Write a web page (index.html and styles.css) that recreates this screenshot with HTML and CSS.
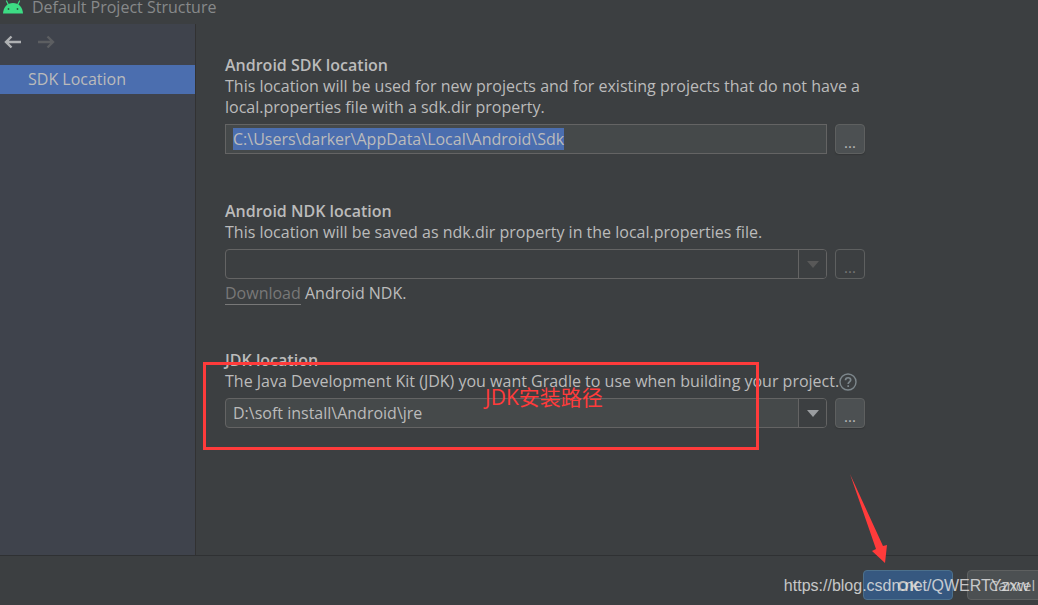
FILE: index.html
```html
<!DOCTYPE html>
<html lang="en">
<head>
<meta charset="utf-8">
<title>Default Project Structure</title>
<link rel="stylesheet" href="styles.css">
</head>
<body>
<div class="window">
  <header class="titlebar">
    <svg class="logo" width="20" height="14" viewBox="0 0 20 14" aria-hidden="true">
      <path d="M5.500 5 3.500 1M14.500 5l2-4" stroke="#3ddc84" stroke-width="1.200" stroke-linecap="round"/>
      <path d="M0 13.500C.4 7 4.500 3 10 3s9.600 4 10 10.500z" fill="#3ddc84"/>
      <circle cx="5.500" cy="9" r=".9" fill="#2b5b41"/><circle cx="14.500" cy="9" r=".9" fill="#2b5b41"/>
    </svg>
    <h1 class="title">Default Project Structure</h1>
  </header>
  <div class="body">
    <aside class="sidebar">
      <div class="history">
        <button class="nav-button" type="button" aria-label="Back"><svg width="18" height="14" viewBox="0 0 18 14"><path d="M17 7H2M7.500 1.500 2 7l5.500 5.500" fill="none" stroke="currentColor" stroke-width="2.400"/></svg></button>
        <button class="nav-button" type="button" aria-label="Forward" disabled><svg width="18" height="14" viewBox="0 0 18 14"><path d="M1 7h15M10.500 1.500 16 7l-5.500 5.500" fill="none" stroke="currentColor" stroke-width="2.400"/></svg></button>
      </div>
      <nav><a class="nav-item" href="#sdk" aria-current="page">SDK Location</a></nav>
    </aside>
    <main class="content">
      <section class="group">
        <h2 class="heading"><label for="sdk">Android SDK location</label></h2>
        <p class="description">This location will be used for new projects and for existing projects that do not have a local.properties file with a sdk.dir property.</p>
        <div class="row">
          <input class="field" id="sdk" type="text" value="C:\Users\darker\AppData\Local\Android\Sdk" spellcheck="false">
          <button class="browse" type="button" aria-label="Browse for SDK">...</button>
        </div>
      </section>
      <section class="group">
        <h2 class="heading"><label for="ndk">Android NDK location</label></h2>
        <p class="description">This location will be saved as ndk.dir property in the local.properties file.</p>
        <div class="row">
          <div class="combo disabled">
            <select class="field" id="ndk" disabled><option></option></select>
            <span class="combo-arrow"><svg width="12" height="7" viewBox="0 0 12 7"><path d="M0 0h12L6 7z" fill="currentColor"/></svg></span>
          </div>
          <button class="browse" type="button" aria-label="Browse for NDK" disabled>...</button>
        </div>
        <p class="hint"><a class="link" href="#ndk">Download</a> Android NDK.</p>
      </section>
      <section class="group">
        <h2 class="heading"><label for="jdk">JDK location</label></h2>
        <p class="description with-help">The Java Development Kit (JDK) you want Gradle to use when building your project.<button class="help" type="button" aria-label="Help"><svg width="18" height="18" viewBox="0 0 18 18"><circle cx="9" cy="9" r="8" fill="none" stroke="currentColor" stroke-width="1.400"/><path d="M6.500 7.200c0-3.200 5.200-3.200 5.200-.3 0 2-2.500 1.900-2.500 4M9.200 12.200v1.700" fill="none" stroke="currentColor" stroke-width="1.700"/></svg></button></p>
        <div class="row">
          <div class="combo">
            <select class="field" id="jdk"><option>D:\soft install\Android\jre</option></select>
            <span class="combo-arrow"><svg width="12" height="7" viewBox="0 0 12 7"><path d="M0 0h12L6 7z" fill="currentColor"/></svg></span>
          </div>
          <button class="browse" type="button" aria-label="Browse for JDK">...</button>
        </div>
      </section>
    </main>
  </div>
  <footer class="footer">
    <button class="action primary" type="button">OK</button>
    <button class="action" type="button">Cancel</button>
  </footer>
  <div class="mark-box"></div>
  <div class="mark-text" lang="zh">JDK安装路径</div>
  <svg class="mark-arrow" width="38" height="90" viewBox="0 0 38 90" aria-hidden="true"><path d="M0 0 33 72l4-1-2 18-13-12 4-2z" fill="#ff3b3b"/></svg>
  <div class="watermark">https://blog.csdn.net/QWERTYzxw</div>
</div>
<script src="app.js"></script>
</body>
</html>
```

FILE: styles.css
```css
* { box-sizing: border-box; }

body {
  margin: 0;
  background: #3c3f41;
  color: #bbbbbb;
  font: 16px/21px "Open Sans", "Noto Sans", sans-serif;
}

button, input, select { font: inherit; color: inherit; }
h1, h2, p { margin: 0; }

.window {
  position: relative;
  display: flex;
  flex-direction: column;
  min-height: 100vh;
  overflow: hidden;
}

.titlebar {
  display: flex;
  align-items: flex-start;
  gap: 9px;
  height: 24px;
  padding-left: 3px;
}
.title {
  color: #87898a;
  font-size: 16px;
  font-weight: 400;
  line-height: 15px;
}

.body { display: flex; flex: 1; }

.sidebar {
  flex: 0 0 196px;
  background: #3f434c;
  border-right: 1px solid #323232;
}
.history {
  display: flex;
  align-items: center;
  gap: 15px;
  height: 41px;
  padding: 0 4px 5px;
}
.nav-button {
  display: flex;
  padding: 0;
  border: 0;
  background: none;
  color: #afb1b3;
}
.nav-button:disabled { color: #5c5e61; }
.nav-item {
  display: block;
  padding-left: 28px;
  background: #4b6eaf;
  color: #bbbbbb;
  line-height: 29px;
  text-decoration: none;
}

.content {
  display: flex;
  flex: 1;
  flex-direction: column;
  gap: 47px;
  min-width: 0;
  padding: 31px 173px 47px 29px;
}
.heading { font-size: 16px; font-weight: 600; }
.with-help { display: flex; align-items: center; white-space: nowrap; }
.help {
  display: flex;
  padding: 0;
  border: 0;
  background: none;
  color: #7d878c;
}

.row { display: flex; gap: 8px; margin-top: 6px; }
.field {
  display: block;
  flex: 1;
  width: 100%;
  min-width: 0;
  height: 30px;
  padding: 0 7px;
  border: 1px solid #646464;
  border-radius: 0;
  outline: 0;
  appearance: none;
  background: #45494a;
}
.field::selection { background: #4b6eaf; color: #bbbbbb; }
.combo { position: relative; flex: 1; }
.combo .field { padding-right: 36px; border-radius: 4px; }
.combo-arrow {
  position: absolute;
  top: 1px;
  right: 1px;
  bottom: 1px;
  display: flex;
  align-items: center;
  justify-content: center;
  width: 28px;
  border-left: 1px solid #646464;
  border-radius: 0 3px 3px 0;
  background: #3c3f41;
  color: #9a9da0;
  pointer-events: none;
}
.disabled .field { background: #3c3f41; opacity: 1; }
.disabled .combo-arrow { color: #585858; }

.browse {
  flex: 0 0 30px;
  height: 30px;
  padding: 5px 0 0;
  border: 1px solid #5e6060;
  border-radius: 4px;
  background: #4c5052;
  box-shadow: 0 1px 1px #343638;
  font-size: 15px;
  line-height: 18px;
}
.browse:disabled { background: none; box-shadow: none; color: #777777; }

.hint { margin-top: 5px; line-height: 19px; }
.link {
  border-bottom: 1px solid #787878;
  color: #787878;
  text-decoration: none;
}

.footer {
  display: flex;
  align-items: center;
  justify-content: flex-end;
  gap: 14px;
  height: 50px;
  padding-top: 9px;
  border-top: 1px solid #2f3133;
}
.action {
  flex: none;
  width: 90px;
  height: 30px;
  padding: 0;
  border: 1px solid #5e6060;
  border-radius: 4px;
  background: #4c5052;
  font-size: 15px;
}
.action:last-child { margin-right: -19px; }
.primary {
  border-color: #4c708c;
  background: #365880;
  font-weight: 700;
}

.mark-box {
  position: absolute;
  top: 362px;
  left: 203px;
  width: 556px;
  height: 88px;
  border: 3px solid #ff3b3b;
  pointer-events: none;
}
.mark-text {
  position: absolute;
  top: 386px;
  left: 485px;
  color: #ff3b3b;
  font: 21px/22px "Open Sans", "Noto Sans CJK SC", sans-serif;
  pointer-events: none;
}
.mark-arrow {
  position: absolute;
  right: 150px;
  bottom: 41px;
  pointer-events: none;
}
.watermark {
  position: absolute;
  right: 9px;
  bottom: 9px;
  color: rgba(225, 225, 225, 0.85);
  font: 16px/20px "Liberation Sans", Arial, sans-serif;
  pointer-events: none;
}
```

FILE: app.js
```js
const sdkField = document.getElementById("sdk");
sdkField.focus();
sdkField.select();
```
